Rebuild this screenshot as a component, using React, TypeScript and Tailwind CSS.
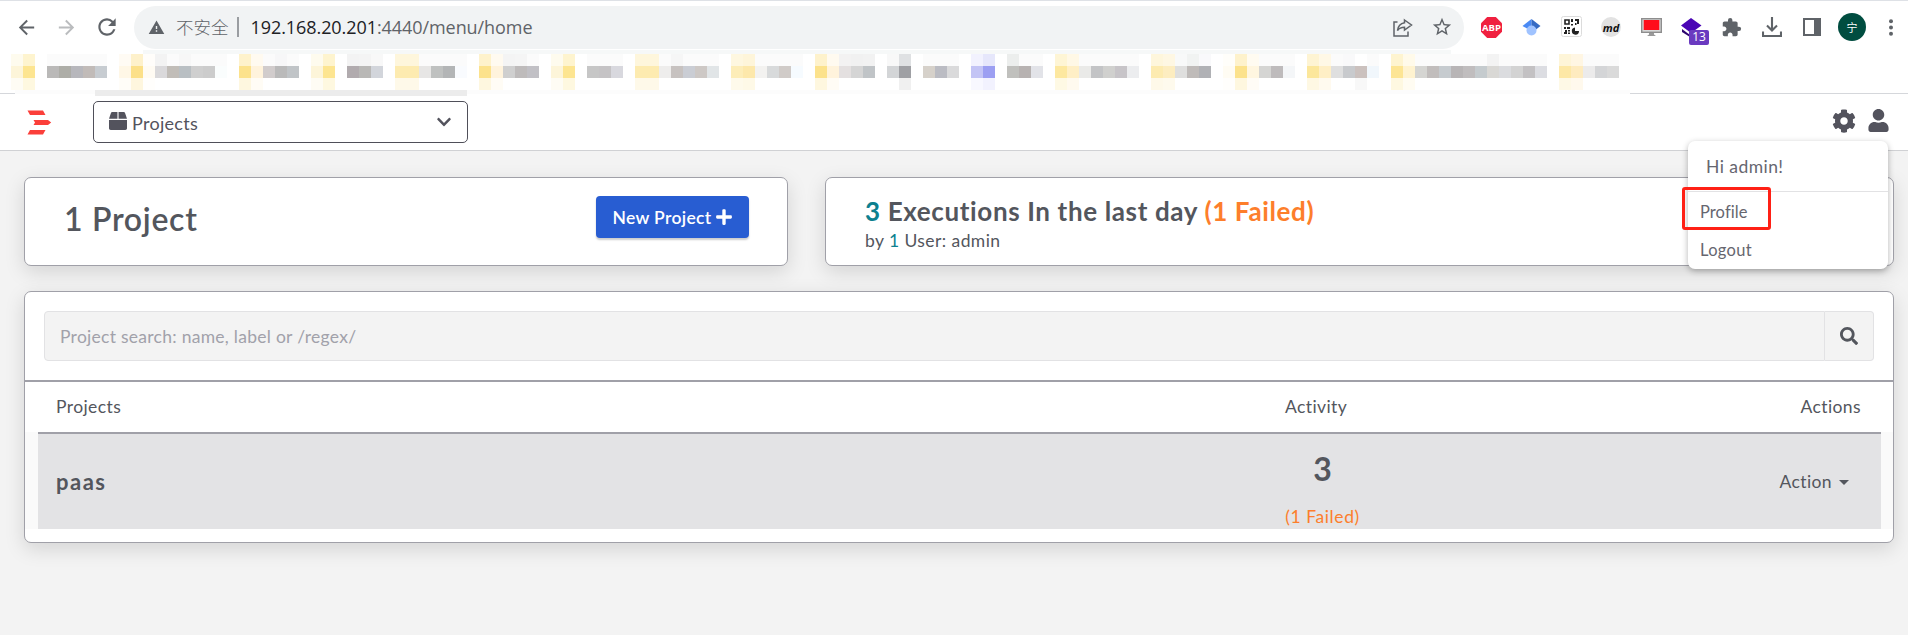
import React from "react";
import { FaBox, FaChevronDown, FaCog, FaPlus, FaSearch, FaUser } from "react-icons/fa";
import { MdArrowBack, MdArrowForward, MdExtension, MdRefresh, MdStarBorder, MdWarning } from "react-icons/md";

type Cell = { mid: string; top?: string; bottom?: string };

const yellow = (mid: string): Cell => ({ mid, top: mid + "70", bottom: mid + "48" });
const plain = (mid: string, top = "#fbfbfb"): Cell => ({ mid, top });

const Y = yellow;
const G = plain;

/* Each entry is [first column, cells]; a column is 12px wide. */
const runs: [number, Cell[]][] = [
  [0, [Y("#fdf5d9"), Y("#fde591")]],
  [3, [G("#bab9b8"), G("#adada7"), G("#b7b7bc"), G("#c1bbb8"), G("#c7ccd1")]],
  [9, [Y("#fff7e6"), Y("#fce089"), Y("#fffbf3"), G("#dad9db", "#f3f3f3"), G("#c1bdb8"), G("#b9bfc3", "#f7f7f7"), G("#cfcfcf"), G("#cccccc"), G("#fafdfd")]],
  [19, [Y("#fce28c"), Y("#fff3dc"), G("#d1cccc"), G("#bababa", "#f7f7f8"), G("#c0c4c7")]],
  [25, [Y("#fdf5d9"), Y("#fde591")]],
  [28, [G("#b1abae", "#f3f3f3"), G("#b9b8b6", "#f4f4f4"), G("#d2d5db", "#f8f8f8")]],
  [32, [Y("#fdebb0"), Y("#fdebb0"), G("#e7e6e5"), G("#bfc1c0"), G("#b3b5b6"), G("#f9fbfe")]],
  [39, [Y("#fce28c"), Y("#fff3dc"), G("#cfcfcf", "#f4f4f4"), G("#bebbbb", "#f5f5f5"), G("#c1c0c5")]],
  [45, [Y("#fdf5d9"), Y("#fde591")]],
  [48, [G("#c6c6c6"), G("#c5c3c5"), G("#d8d8de")]],
  [52, [Y("#fdebb0"), Y("#fdebb0"), G("#eeedec"), G("#c7c2c0", "#f6f6f6"), G("#cacdd4"), G("#cdc8c5"), G("#e1e5e7")]],
  [60, [Y("#fdedb8"), Y("#fde8ab"), G("#f3f2f0"), G("#d8dadb"), G("#d0cbc8"), G("#f6fbff")]],
  [67, [Y("#fce28c"), Y("#fff3dc"), G("#e4e0e0", "#f3f2f2"), G("#d5d5d5", "#f1f1f1"), G("#c0c4c7", "#f2f2f2")]],
  [73, [G("#d3d5d7", "#f8f8f8"), { mid: "#9fa0a4", top: "#dfe1e3", bottom: "#f0f0f0" }]],
  [76, [G("#d6d1ca"), G("#bbbcc3"), G("#dadadb")]],
  [80, [{ mid: "#c3c4f5", top: "#f2f2fe", bottom: "#f8f8ff" }, { mid: "#9c9ff2", top: "#e6e7fb", bottom: "#f2f2fe" }]],
  [83, [G("#c0c0bd", "#eceeed"), G("#b7b2b1"), G("#e2e3e8")]],
  [87, [Y("#fde8a0"), Y("#ffefc6"), G("#eaeae8"), G("#c3c4c6"), G("#d0d0ce"), G("#c7c4c8"), G("#ecedef")]],
  [95, [Y("#fdebb0"), Y("#fdedc0"), G("#dfdfde", "#f8f9f9"), G("#bfbbb9", "#f1f3f2"), G("#b0b1b5", "#f9f9fb")]],
  [101, [Y("#fffcf3"), Y("#fce28c"), Y("#fff6e0"), G("#d5d5d3"), G("#bebbbc"), G("#f4f6f8")]],
  [108, [Y("#fce79b"), Y("#ffefc6"), G("#dfdfdf"), G("#c8cacd", "#f9f9fa"), { mid: "#cbc1be", bottom: "#f8f8f8" }, G("#f1f7fc")]],
  [115, [Y("#fde594"), Y("#fff3d0"), G("#d5d5d2"), G("#c1bdbc"), G("#c6cbcf"), G("#b8b5b6"), G("#c0bdbe"), G("#c5cbce"), G("#d9d8d5", "#f3f3f3"), G("#dbdcdf"), G("#d3d3d3"), G("#c3c1c3"), G("#dcdde2")]],
  [129, [Y("#fde8a6"), Y("#feebbf"), G("#ecebeb"), G("#d4d5d7"), G("#dadada")]],
];

const columns: (Cell | null)[] = Array.from({ length: 134 }, () => null);
runs.forEach(([start, cells]) => cells.forEach((c, i) => (columns[start + i] = c)));

function Bookmarks() {
  return (
    <div className="flex h-9 pl-[11px]">
      {columns.map((c, i) => (
        <div key={i} className="flex w-3 shrink-0 flex-col">
          {c && (
            <>
              <span className="h-3" style={{ backgroundColor: c.top }} />
              <span className="h-3" style={{ backgroundColor: c.mid }} />
              <span className="h-3" style={{ backgroundColor: c.bottom }} />
            </>
          )}
        </div>
      ))}
    </div>
  );
}

function Extensions() {
  return (
    <div className="flex h-[42px] items-center">
      <svg className="ml-[17px] size-[21px] overflow-visible" viewBox="0 0 21 21">
        <path d="M6.2 0h8.6L21 6.2v8.6L14.8 21H6.2L0 14.8V6.2z" fill="#f0203f" />
        <text x="10.5" y="14.200" textAnchor="middle" fontFamily="Open Sans, sans-serif" fontWeight="700" fontSize="9.500" fill="#fff">ABP</text>
      </svg>
      <svg className="ml-[20px] size-[19px]" viewBox="0 0 19 19">
        <path d="M9.5 1 0.5 8l4.5 2.5h4.5z" fill="#4a8af4" />
        <path d="M9.5 1l9 7L14 11.500 9.500 9z" fill="#356ac3" />
        <circle cx="9.500" cy="12.500" r="5" fill="#a0c3ff" />
      </svg>
      <svg className="ml-[20px] size-[22px]" viewBox="0 0 22 22">
        <rect x="0.500" y="0.500" width="20" height="20" rx="2" fill="#fff" stroke="#dcdcdc" />
        <path d="M4 4h4v4H4z" fill="none" stroke="#222" strokeWidth="1.600" />
        <path d="M10 3h2v3h-2zM14 3h4v5h-2V5h-2zM10 8h2v1.500h-2zM14 7h1.500v2H14zM3 11h2v2H3zM6 11h3v2H6zM4 14h2v4H3v-2h1zM7 14h2v1.500H7zM7 16.500h2V18H7z" fill="#222" />
        <path d="M14 11.500v3.500h4a3.600 3.600 0 1 1-4-3.500z" fill="#222" />
      </svg>
      <div className="ml-[18px] flex size-[20px] items-center justify-center rounded-full bg-[#e2e2e2] font-['Open_Sans',sans-serif] text-[11px] font-bold italic leading-none text-[#111]">md</div>
      <svg className="ml-[20px] h-[19px] w-[21px]" viewBox="0 0 21 19">
        <rect x="0.700" y="0.700" width="19.600" height="13.600" fill="#d8d8d8" stroke="#8e8e8e" strokeWidth="1.400" />
        <rect x="2.700" y="2" width="15.600" height="10" fill="#ff0d1b" />
        <path d="M8 15h5v1.500l2 1.500H6l2-1.500z" fill="#999" />
      </svg>
      <div className="relative ml-[19px] h-[19px] w-[21px]">
        <svg className="size-full" viewBox="0 0 21 19">
          <path d="M10 0l10.500 7.500L10 15 0 7.500z" fill="#4a06b5" />
          <path d="M1 11l8 6v2l-8-5z" fill="#2c046e" />
        </svg>
        <span className="absolute left-[8px] top-[12px] flex h-[15px] w-5 items-center justify-center rounded-[2px] bg-[#6a3ac0] font-['Open_Sans',sans-serif] text-[12px] leading-none text-white">13</span>
      </div>
      <MdExtension className="ml-[19px] size-[21px] text-[#5f6368]" />
      <svg className="ml-[20px] size-[20px]" viewBox="0 0 20 20" fill="none" stroke="#5f6368" strokeWidth="2.100">
        <path d="M10 0v13M5 8.500l5 5 5-5M1 14.500V19h18v-4.500" />
      </svg>
      <svg className="ml-[21px] h-[18px] w-[18px]" viewBox="0 0 18 18">
        <path d="M0 0h18v18H0zM2 2v14h9V2z" fill="#5f6368" fillRule="evenodd" />
      </svg>
      <div className="ml-[17px] flex size-[28px] items-center justify-center rounded-full bg-[#004d40] font-['Noto_Sans_CJK_SC',sans-serif] text-[11px] leading-none text-white">宁</div>
      <svg className="ml-[21px] h-[17px] w-[8px]" viewBox="0 0 8 17" fill="#5f6368">
        <circle cx="4" cy="2.300" r="2" />
        <circle cx="4" cy="8.500" r="2" />
        <circle cx="4" cy="14.700" r="2" />
      </svg>
    </div>
  );
}

function BrowserBar() {
  return (
    <div className="h-[94px] bg-white">
      <div className="flex h-[50px] items-start border-t border-[#dee1e6] pt-[5px]">
        <div className="flex h-[42px] w-[134px] items-center text-[#5f6368]">
          <MdArrowBack className="ml-[15px] size-[23px]" />
          <MdArrowForward className="ml-[17px] size-[23px] text-[#babcbe]" />
          <MdRefresh className="ml-[16px] size-[26px]" />
        </div>
        <div className="flex h-[43px] w-[1330px] items-center rounded-full bg-[#f1f3f4] pb-[1px] text-[#5f6368]">
          <MdWarning className="ml-[14px] size-[17px]" />
          <span className="ml-[11px] w-[53px] whitespace-nowrap font-['Noto_Sans_CJK_SC',sans-serif] text-[17.500px] font-light leading-none">不安全</span>
          <span className="ml-[8px] h-[20px] w-[1.500px] bg-[#9a9da1]" />
          <span className="ml-[12px] font-['Open_Sans',sans-serif] text-[18px] leading-none tracking-[-0.070px]">
            <span className="text-[#202124]">192.168.20.201</span>:4440/menu/home
          </span>
          <svg className="ml-auto h-[19px] w-[20px]" viewBox="0 0 20 19" fill="none" stroke="#5f6368" strokeWidth="1.500">
            <path d="M4.500 4H1v14h14v-4.500M11.500 2l7 5-7 5V9.300C8 9.300 6 10.300 4.500 12.500 5 8.500 7.500 5.500 11.500 4.800z" />
          </svg>
          <MdStarBorder className="ml-[18px] mr-[11px] size-[22px]" />
        </div>
        <Extensions />
      </div>
      <div className="ml-[143px] h-1 w-[1308px] bg-[#f6f8f8]" />
      <Bookmarks />
      <div className="flex h-[4px]">
        <span className="mt-[3px] h-px w-[15px] bg-[#d5d7db]" />
        <span className="h-[4px] w-[80px] bg-[#fcfcfc]" />
        <span className="h-[4px] w-[372px] bg-[#ececec]" />
        <span className="h-[4px] w-[1163px] bg-[#fcfcfc]" />
        <span className="mt-[3px] h-px grow bg-[#d5d7db]" />
      </div>
    </div>
  );
}

function AppHeader() {
  return (
    <header className="flex h-[57px] items-start border-b border-[#d0d1d4] bg-white">
      <svg className="ml-[27px] mt-[16px] h-[25px] w-[25px]" viewBox="0 0 25 25" fill="#fb3f3a">
        <path d="M0.500 0.500h15.500l2.500 4.500H3zM6.500 10h14.500l3.200 2.500L21 15H6.500l1.500-2.500zM3 20h15.500L16 24.500H0.500z" />
      </svg>
      <div className="ml-[41px] w-[375px]">
        <div className="ml-[2px] h-[2px] w-[372px] bg-[#ececec]" />
        <div className="mt-[5px] flex h-[42px] items-center rounded-[5px] border border-[#4f4f59] px-[15px] text-[#53535d]">
          <FaBox className="mb-[3px] size-[18px]" />
          <span className="ml-[5px] pt-[2px] text-[18px] leading-none tracking-[0.300px]">Projects</span>
          <FaChevronDown className="ml-auto size-[16px]" />
        </div>
      </div>
      <div className="ml-auto mt-[15px] flex pr-[18px] text-[#53535d]">
        <FaCog className="size-[24px]" />
        <FaUser className="ml-[11px] size-[23px]" />
      </div>
    </header>
  );
}

function UserMenu() {
  return (
    <>
      <div className="absolute left-[1688px] top-[141px] h-[128px] w-[200px] rounded-[7px] bg-white text-[#66666f] shadow-[0_2px_6px_rgba(0,0,0,0.3)]">
        <div className="h-[51px] border-b border-[#e2e2e4] pl-[18px] text-[17.500px] leading-[51px] tracking-[0.450px]">Hi admin!</div>
        <div className="h-[39px] pl-[12px] text-[16.500px] leading-[40px] tracking-[0.100px]">Profile</div>
        <div className="h-[38px] pl-[12px] text-[16.500px] leading-[38px] tracking-[0.300px]">Logout</div>
      </div>
      <div className="absolute left-[1682px] top-[187px] h-[43px] w-[89px] rounded-[3px] border-[3px] border-[#ff2015]" />
    </>
  );
}

const card = "rounded-[7px] border border-[#a0a0a8] bg-white shadow-[0_6px_20px_rgba(0,0,0,0.13)]";

export default function App() {
  return (
    <div className="relative h-[635px] w-[1908px] overflow-hidden bg-[#f3f3f3] font-[Lato,sans-serif] text-[#53565d]">
      <BrowserBar />
      <AppHeader />
      <main className="pl-6 pr-[14px] pt-[26px]">
        <div className="flex gap-[37px]">
          <section className={`${card} flex h-[89px] w-[764px] items-start justify-between pl-[39px] pr-[38px]`}>
            <h1 className="mt-[21px] text-[32px] font-semibold leading-[40px] tracking-[0.700px]">1 Project</h1>
            <button className="mt-[18px] flex h-[42px] w-[153px] items-center justify-center gap-[3px] rounded-[4px] bg-[#285dd2] text-[17.500px] font-semibold tracking-[0.350px] text-white shadow-[0_2px_2px_rgba(0,0,0,0.2)]">
              <span className="pt-[2px]">New Project</span>
              <FaPlus className="size-[18px]" />
            </button>
          </section>
          <section className={`${card} h-[89px] w-[1069px] pl-[39px]`}>
            <h2 className="mt-[16px] text-[26px] font-bold leading-[34px] tracking-[0.630px]">
              <span className="text-[#0d808f]">3</span> Executions In the last day <span className="text-[#fd7e2b]">(1 Failed)</span>
            </h2>
            <p className="text-[17.500px] leading-[26px] tracking-[0.430px]">
              by <span className="text-[#0d808f]">1</span> User: admin
            </p>
          </section>
        </div>
        <section className={`${card} mt-[25px] h-[252px] w-[1870px]`}>
          <div className="flex h-[88px] items-start px-[19px] pt-[19px]">
            <div className="flex h-[50px] grow items-center rounded-l-[4px] border border-[#e2e2e4] bg-[#f3f3f3] pl-[15px] pt-[2px] text-[17.500px] tracking-[0.270px] text-[#a1a1aa]">
              Project search: name, label or /regex/
            </div>
            <div className="flex h-[50px] w-[49px] items-center justify-center rounded-r-[4px] border border-l-0 border-[#e2e2e4] bg-[#f3f3f3]">
              <FaSearch className="size-[18px]" />
            </div>
          </div>
          <div className="flex h-[52px] items-center border-t-2 border-[#a0a0a8] pl-[31px] pr-[32px] pt-px text-[17.500px] tracking-[0.400px]">
            <span className="w-[1229px]">Projects</span>
            <span>Activity</span>
            <span className="ml-auto">Actions</span>
          </div>
          <div className="h-[97px] bg-[#fafafa] pl-[13px] pr-[12px]">
            <div className="flex h-full border-t-2 border-[#a0a0a8] bg-[#e3e3e5] pl-[18px] pr-[32px]">
              <span className="w-[1229px] text-[22px] font-bold leading-[96px] tracking-[1.500px]">paas</span>
              <div className="flex w-[75px] flex-col items-center">
                <span className="mt-[14px] text-[32px] font-bold leading-[42px]">3</span>
                <span className="mt-[14px] whitespace-nowrap text-[17.500px] leading-[26px] tracking-[0.600px] text-[#fd7e2b]">(1 Failed)</span>
              </div>
              <span className="ml-auto flex items-center pt-px text-[17.500px] tracking-[0.400px]">
                Action
                <svg className="ml-[7px] h-[5px] w-[10px]" viewBox="0 0 10 5" fill="currentColor">
                  <path d="M0 0h10L5 5z" />
                </svg>
              </span>
            </div>
          </div>
        </section>
      </main>
      <UserMenu />
    </div>
  );
}
